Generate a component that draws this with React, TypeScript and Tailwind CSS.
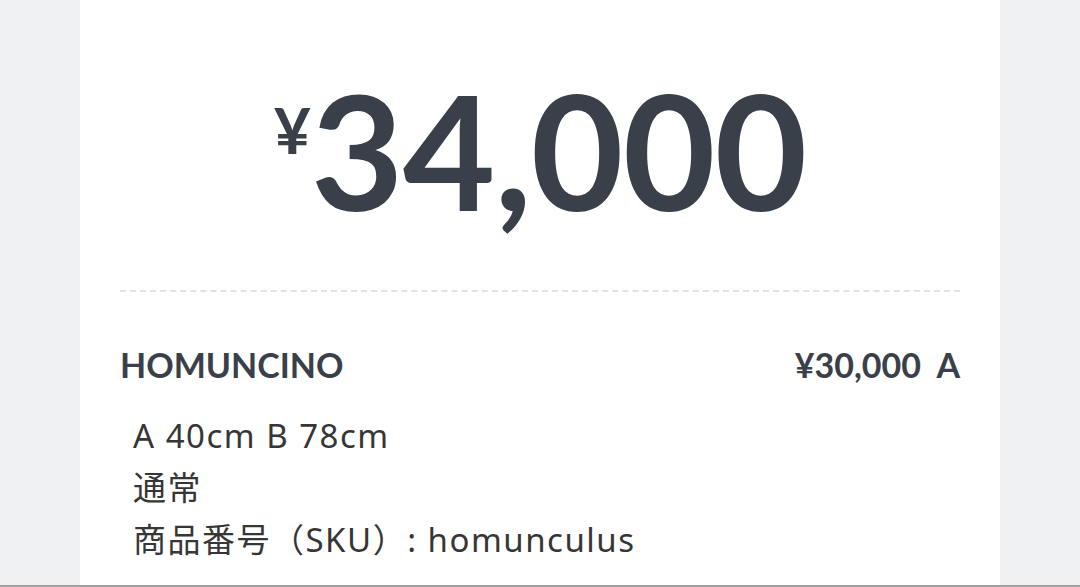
export default function App() {
  return (
    <div className="min-h-[587px] w-full bg-[#f0f1f3] flex flex-col">
      <div className="mx-[80px] flex-1 bg-white px-[40px] font-['Lato','Noto_Sans_CJK_JP',sans-serif] text-[#3a4049]">
        <div className="flex justify-center pt-[69px] pb-[61px]">
          <div className="flex items-start">
            <span className="mt-[29px] text-[64px] font-bold leading-none">¥</span>
            <span className="text-[160px] font-bold leading-[160px] tracking-[-1px]">34,000</span>
          </div>
        </div>
        <div className="border-t-2 border-dashed border-[#e2e2e2]" />
        <div className="flex items-center justify-between pt-[51px] text-[34px] font-bold leading-[44px]">
          <span>HOMUNCINO</span>
          <span>¥30,000&nbsp;&nbsp;A</span>
        </div>
        <div className="flex flex-col pt-[23px] pl-[13px] font-['Noto_Sans','Noto_Sans_CJK_JP',sans-serif] text-[33px] leading-[52px] tracking-[1.5px] text-[#363636]">
          <span>A 40cm B 78cm</span>
          <span>通常</span>
          <span>商品番号（SKU）: homunculus</span>
        </div>
      </div>
      <div className="h-[2px] bg-[#a0a0a0]" />
    </div>
  );
}
